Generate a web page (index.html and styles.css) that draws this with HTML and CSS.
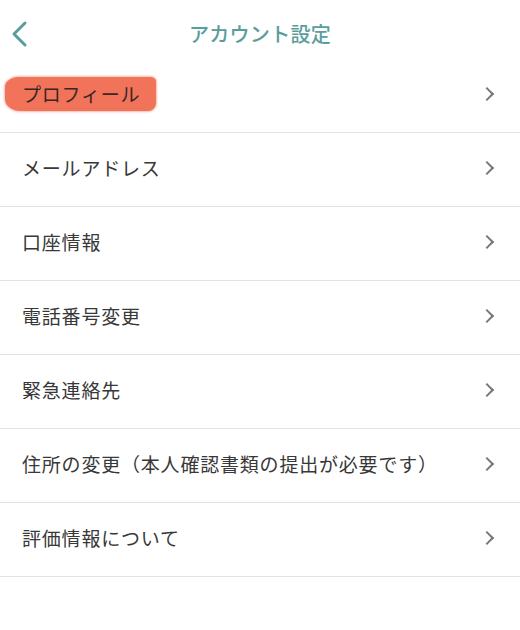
FILE: index.html
```html
<!DOCTYPE html>
<html>
<head>
    <title>アカウント設定</title>
    <link rel="stylesheet" href="styles.css">
</head>
<body>
    <div class="header">
        <a class="back" href="#">
            <svg width="20" height="28" viewBox="0 0 20 28">
                <polyline points="15,3 4,14 15,25" fill="none" stroke="#5a9e9c" stroke-width="3" stroke-linecap="round" stroke-linejoin="round"/>
            </svg>
        </a>
        <h1>アカウント設定</h1>
    </div>

    <ul class="menu">
        <li><span class="label marked">プロフィール</span><span class="arrow"></span></li>
        <li><span class="label">メールアドレス</span><span class="arrow"></span></li>
        <li><span class="label">口座情報</span><span class="arrow"></span></li>
        <li><span class="label">電話番号変更</span><span class="arrow"></span></li>
        <li><span class="label">緊急連絡先</span><span class="arrow"></span></li>
        <li><span class="label">住所の変更（本人確認書類の提出が必要です）</span><span class="arrow"></span></li>
        <li><span class="label">評価情報について</span><span class="arrow"></span></li>
    </ul>
</body>
</html>
```

FILE: styles.css
```css
body {
    margin: 0;
    background-color: #ffffff;
    font-family: "Noto Sans CJK JP", "Noto Sans", sans-serif;
    color: #383838;
}
.header {
    height: 59px;
    position: relative;
    box-sizing: border-box;
    padding-top: 21px;
}
.back {
    position: absolute;
    left: 10px;
    top: 20px;
}
h1 {
    margin: 0;
    text-align: center;
    font-size: 20px;
    line-height: 26px;
    font-weight: 500;
    letter-spacing: 0.3px;
    color: #5a9e9c;
}
.menu {
    list-style: none;
    margin: 0;
    padding: 0;
}
.menu li {
    height: 74px;
    box-sizing: border-box;
    border-bottom: 1px solid #e2e2e2;
    display: flex;
    align-items: center;
    justify-content: space-between;
    padding: 0 24px 3px 22px;
}
.label {
    font-size: 19px;
    letter-spacing: 0.8px;
    line-height: 26px;
}
.marked {
    background-color: #f0735a;
    color: #3a2624;
    margin-left: -17px;
    padding: 4px 16px 4px 17px;
    border-radius: 14px 6px 8px 16px / 10px 4px 8px 12px;
    box-shadow: 0 0 3px #f0735a;
}
.arrow {
    width: 8px;
    height: 8px;
    border-top: 2px solid #777777;
    border-right: 2px solid #777777;
    transform: rotate(45deg);
    margin-right: 4px;
}
```
